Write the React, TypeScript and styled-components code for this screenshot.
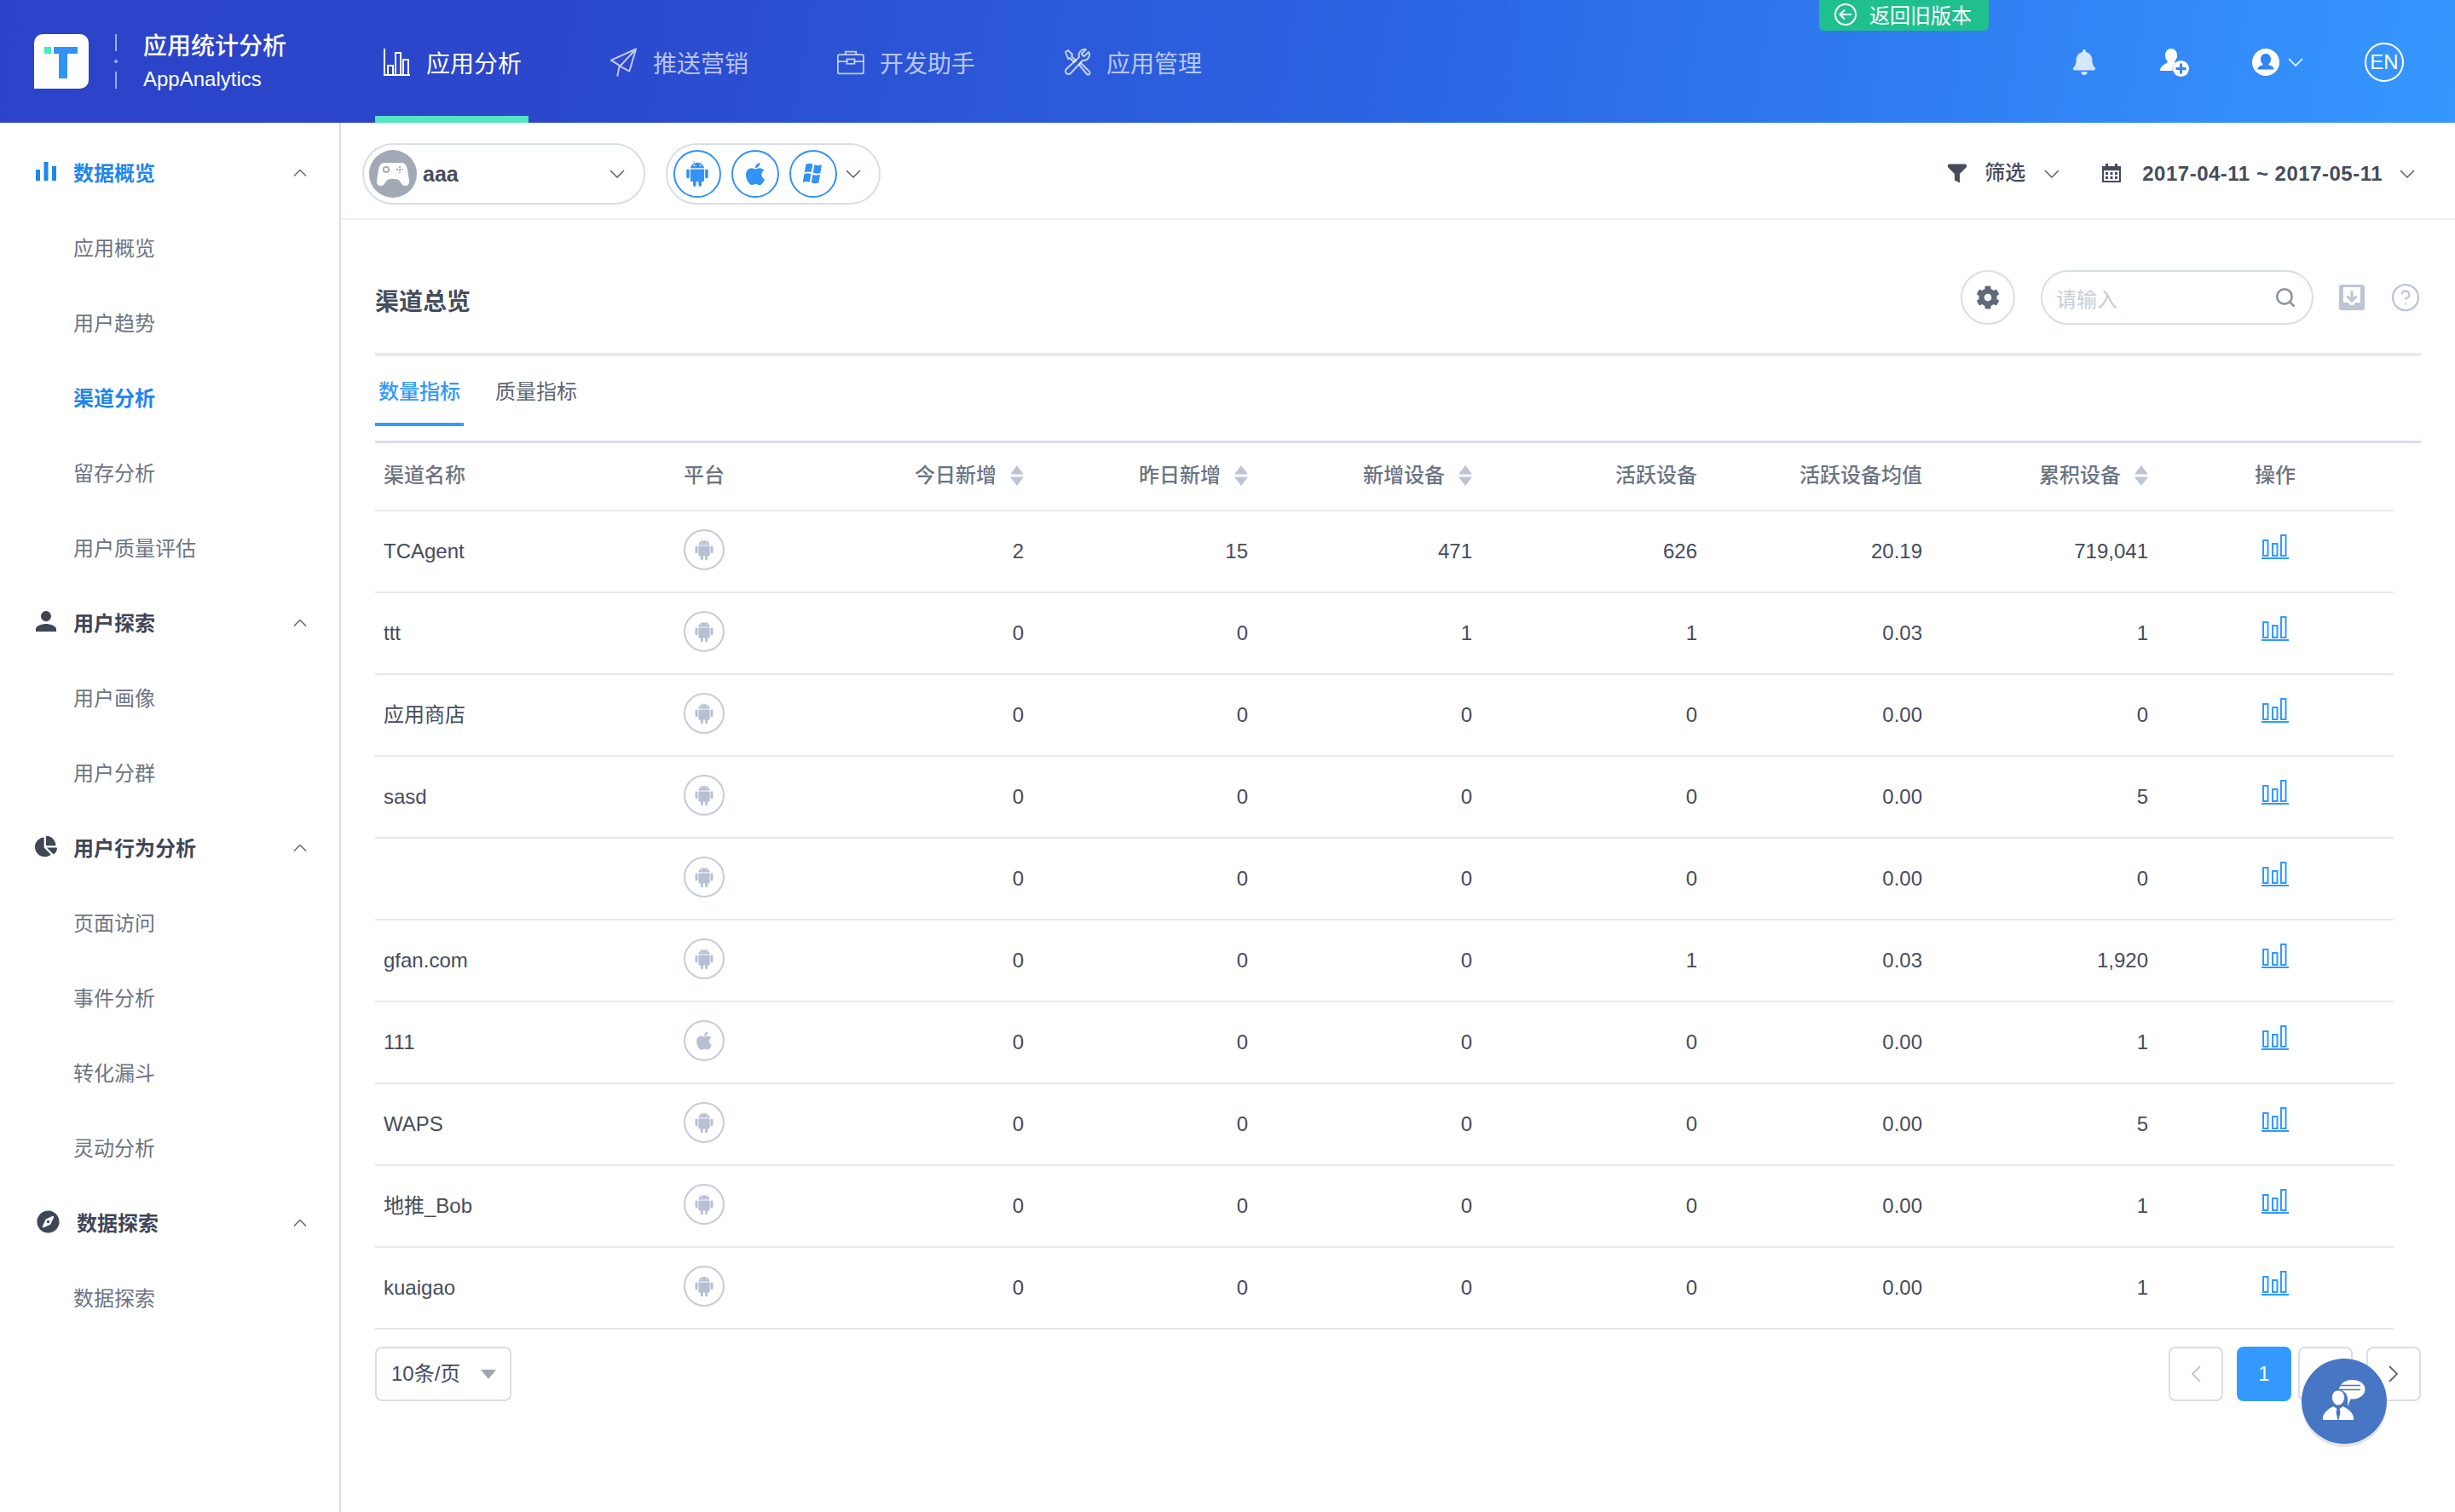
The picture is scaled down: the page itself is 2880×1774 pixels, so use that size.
import React from 'react';
import styled, { createGlobalStyle } from 'styled-components';
import { Search, CircleHelp } from 'lucide-react';
import { AiFillAndroid } from 'react-icons/ai';
import { FaApple, FaBell, FaCog, FaCompass, FaChartPie } from 'react-icons/fa';
import { MdPerson } from 'react-icons/md';

const GlobalStyle = createGlobalStyle`
  html, body {
    margin: 0;
    padding: 0;
    background: #fff;
  }
  * {
    box-sizing: border-box;
  }
  body {
    font-family: "Liberation Sans", "Noto Sans CJK SC", sans-serif;
    color: #454c5c;
  }
`;

const Page = styled.div`
  display: flex;
  flex-direction: column;
  min-height: 1774px;
  position: relative;
  overflow: hidden;
`;

/* ---------- top bar ---------- */

const TopBar = styled.header`
  align-items: center;
  background: linear-gradient(100deg, #2b43c8 0%, #2b47cc 22%, #2b68e5 60%, #3697ff 100%);
  display: flex;
  height: 144px;
  padding: 0 60px 0 40px;
  position: relative;
`;

const LogoBox = styled.div`
  background: #fff;
  border-radius: 10px 10px 10px 0;
  height: 64px;
  position: relative;
  width: 64px;
  &::before {
    background: #3cf0c0;
    content: '';
    height: 8px;
    left: 12px;
    position: absolute;
    top: 15px;
    width: 8px;
  }
`;

const LogoT = styled.svg`
  height: 37px;
  left: 23px;
  position: absolute;
  top: 15px;
  width: 28px;
`;

const LogoDivider = styled.div`
  align-items: center;
  display: flex;
  flex-direction: column;
  height: 64px;
  justify-content: space-between;
  margin: 0 31px 0 31px;
  width: 2px;
`;

const LogoDash = styled.span<{ $dot?: boolean }>`
  background: rgba(255, 255, 255, 0.55);
  border-radius: ${(p) => (p.$dot ? '50%' : '0')};
  display: block;
  height: ${(p) => (p.$dot ? '4px' : '20px')};
  width: ${(p) => (p.$dot ? '4px' : '2px')};
`;

const Brand = styled.div`
  color: #fff;
  display: flex;
  flex-direction: column;
  padding-top: 3px;
  width: 272px;
`;

const BrandTitle = styled.div`
  font-size: 28px;
  font-weight: 500;
  line-height: 38px;
`;

const BrandSub = styled.div`
  font-size: 24px;
  line-height: 38px;
`;

const NavList = styled.nav`
  align-items: stretch;
  display: flex;
  gap: 86px;
  height: 144px;
`;

const NavItem = styled.div<{ $active?: boolean }>`
  align-items: center;
  border-bottom: 8px solid ${(p) => (p.$active ? '#54e5c3' : 'transparent')};
  color: ${(p) => (p.$active ? '#fff' : 'rgba(255, 255, 255, 0.68)')};
  display: flex;
  font-size: 28px;
  gap: 18px;
  padding: 10px 0 0 10px;
  width: 180px;
  white-space: nowrap;
`;

const NavIconSlot = styled.span`
  align-items: center;
  display: flex;
  height: 34px;
  justify-content: center;
  width: 32px;
`;

const BackTab = styled.div`
  align-items: center;
  background: #1fc08e;
  border-radius: 0 0 6px 6px;
  color: #fff;
  display: flex;
  font-size: 24px;
  gap: 15px;
  height: 36px;
  left: 2134px;
  padding: 0 0 3px 18px;
  position: absolute;
  top: 0;
  white-space: nowrap;
  width: 199px;
`;

const TopRight = styled.div`
  align-items: center;
  display: flex;
  gap: 74px;
  margin-left: auto;
  padding-top: 2px;
`;

const UserGroup = styled.div`
  align-items: center;
  display: flex;
  gap: 10px;
  margin-right: -2px;
`;

const LangBadge = styled.div`
  align-items: center;
  border: 2px solid #fff;
  border-radius: 50%;
  color: #fff;
  display: flex;
  font-size: 24px;
  height: 46px;
  justify-content: center;
  width: 46px;
`;

/* ---------- shared bits ---------- */

const ChevronSvg = styled.svg<{ $up?: boolean; $color?: string; $w?: number }>`
  color: ${(p) => p.$color || '#5d6573'};
  display: block;
  height: 10px;
  transform: ${(p) => (p.$up ? 'rotate(180deg)' : 'none')};
  width: ${(p) => p.$w || 18}px;
`;

const Chevron: React.FC<{ up?: boolean; color?: string; w?: number }> = ({ up, color, w }) => (
  <ChevronSvg $up={up} $color={color} $w={w} viewBox="0 0 18 10">
    <polyline points="1,1 9,9 17,1" fill="none" stroke="currentColor" strokeWidth="1.6" />
  </ChevronSvg>
);

/* ---------- body layout ---------- */

const Body = styled.div`
  display: flex;
  flex: 1;
`;

const Sidebar = styled.aside`
  border-right: 2px solid #d6dce7;
  flex: none;
  padding-top: 13px;
  width: 400px;
`;

const MenuRow = styled.div<{ $group?: boolean; $active?: boolean }>`
  align-items: center;
  color: ${(p) => (p.$active ? '#1f86ee' : p.$group ? '#3f4757' : '#6c7583')};
  display: flex;
  font-size: 24px;
  font-weight: ${(p) => (p.$active || p.$group ? 700 : 400)};
  height: 88px;
  padding-left: ${(p) => (p.$group ? '42px' : '86px')};
  padding-right: 38px;
`;

const MenuIcon = styled.span<{ $wide?: boolean }>`
  align-items: center;
  display: flex;
  justify-content: center;
  margin-right: 20px;
  width: ${(p) => (p.$wide ? '28px' : '24px')};
`;

const MenuLabel = styled.span`
  flex: 1;
`;

const MenuChevron = styled.span`
  display: block;
  padding-top: 4px;
`;

const Main = styled.main`
  display: flex;
  flex: 1;
  flex-direction: column;
  min-width: 0;
`;

const FilterBar = styled.div`
  align-items: center;
  border-bottom: 2px solid #eef0f4;
  display: flex;
  height: 114px;
  padding: 8px 47px 0 25px;
`;

const AppPill = styled.div`
  align-items: center;
  border: 2px solid #d8dee8;
  border-radius: 36px;
  display: flex;
  height: 72px;
  padding-left: 6px;
  padding-right: 22px;
  width: 332px;
`;

const AppAvatar = styled.span`
  align-items: center;
  background: #a0a9b5;
  border-radius: 50%;
  display: flex;
  height: 56px;
  justify-content: center;
  width: 56px;
`;

const AppName = styled.span`
  color: #454c5c;
  flex: 1;
  font-size: 25px;
  font-weight: 700;
  margin-left: 7px;
`;

const PlatformPill = styled.div`
  align-items: center;
  border: 2px solid #d8dee8;
  border-radius: 36px;
  display: flex;
  gap: 12px;
  height: 72px;
  margin-left: 24px;
  padding-left: 7px;
  width: 252px;
`;

const PlatformButton = styled.span`
  align-items: center;
  border: 2px solid #3393f5;
  border-radius: 50%;
  color: #3393f5;
  display: flex;
  font-size: 34px;
  height: 56px;
  justify-content: center;
  width: 56px;
`;

const PlatformChevron = styled.span`
  display: block;
  margin-left: -2px;
`;

const FilterTools = styled.div`
  align-items: center;
  color: #454c5c;
  display: flex;
  font-size: 24px;
  font-weight: 500;
  margin-left: auto;
`;

const FilterLabel = styled.span`
  line-height: 28px;
  margin: 0 22px 0 20px;
  padding-bottom: 3px;
`;

const DateLabel = styled.span`
  font-size: 24px;
  font-weight: 700;
  letter-spacing: 0.5px;
  margin: 0 20px 0 24px;
  white-space: nowrap;
`;

const Spacer = styled.span`
  display: block;
  width: 49px;
`;

const Content = styled.section`
  display: flex;
  flex: 1;
  flex-direction: column;
  padding: 0 40px;
`;

const PanelHead = styled.div`
  align-items: center;
  border-bottom: 4px solid #e6e9ef;
  display: flex;
  height: 160px;
  padding-top: 26px;
`;

const PanelTitle = styled.h2`
  color: #454c5c;
  font-size: 28px;
  font-weight: 700;
  margin: 6px 0 0;
`;

const PanelTools = styled.div`
  align-items: center;
  display: flex;
  margin-left: auto;
`;

const GearButton = styled.span`
  align-items: center;
  border: 2px solid #d8dee8;
  border-radius: 50%;
  color: #5e6a7c;
  display: flex;
  font-size: 28px;
  height: 64px;
  justify-content: center;
  width: 64px;
`;

const SearchBox = styled.div`
  align-items: center;
  border: 2px solid #d8dee8;
  border-radius: 32px;
  color: #c6cdd9;
  display: flex;
  font-size: 24px;
  height: 64px;
  justify-content: space-between;
  margin-left: 30px;
  padding: 0 18px 0 16px;
  width: 320px;
`;

const ToolIcon = styled.span`
  display: flex;
  margin-left: 30px;
`;

const TabBar = styled.div`
  border-bottom: 3px solid #d8dee8;
  display: flex;
  gap: 33px;
  height: 102px;
  padding-top: 23px;
`;

const Tab = styled.div<{ $active?: boolean }>`
  border-bottom: 4px solid ${(p) => (p.$active ? '#3399ff' : 'transparent')};
  color: ${(p) => (p.$active ? '#3399ff' : '#5b6472')};
  font-size: 24px;
  font-weight: ${(p) => (p.$active ? 500 : 400)};
  height: 59px;
  line-height: 38px;
  padding: 0 4px;
  text-align: center;
  width: 104px;
`;

const COLUMNS = '362px 200px 199px 263px 263px 264px 264px 265px 288px';

const TableWrap = styled.div`
  width: 2368px;
`;

const GridRow = styled.div<{ $head?: boolean }>`
  align-items: center;
  border-bottom: 2px solid #e6e9ef;
  color: ${(p) => (p.$head ? '#6b7482' : '#454c5c')};
  display: grid;
  font-size: 24px;
  font-weight: ${(p) => (p.$head ? 500 : 400)};
  grid-template-columns: ${COLUMNS};
  height: ${(p) => (p.$head ? '80px' : '96px')};
  line-height: 28px;
  padding-bottom: ${(p) => (p.$head ? '2px' : '0')};
`;

const NameCell = styled.div`
  padding-left: 10px;
`;

const PlatformCell = styled.div`
  display: flex;
`;

const NumCell = styled.div`
  text-align: right;
`;

const HeadNumCell = styled.div`
  align-items: center;
  display: flex;
  gap: 16px;
  justify-content: flex-end;
`;

const OpCell = styled.div`
  color: #6b7482;
  padding-left: 125px;
`;

const OpIconCell = styled.div`
  display: flex;
  margin-top: -13px;
  padding-left: 133px;
`;

const SortGlyph = styled.svg`
  display: block;
  height: 24px;
  width: 16px;
`;

const PlatformBadge = styled.span`
  align-items: center;
  border: 2px solid #c4cbdc;
  border-radius: 50%;
  color: #b7bfd2;
  display: flex;
  font-size: 28px;
  height: 48px;
  justify-content: center;
  margin-top: -4px;
  width: 48px;
`;

const FooterRow = styled.div`
  align-items: flex-start;
  display: flex;
  justify-content: space-between;
  padding-top: 20px;
`;

const PageSize = styled.div`
  align-items: center;
  border: 2px solid #d8dee8;
  border-radius: 8px;
  color: #454c5c;
  display: flex;
  font-size: 24px;
  height: 64px;
  justify-content: space-between;
  line-height: 28px;
  padding: 0 16px 0 17px;
  width: 160px;
`;

const Caret = styled.span`
  border-left: 9px solid transparent;
  border-right: 9px solid transparent;
  border-top: 11px solid #9ca5b3;
  display: block;
`;

const Pager = styled.div`
  display: flex;
`;

const PageButton = styled.span<{ $active?: boolean; $gap?: number }>`
  align-items: center;
  background: ${(p) => (p.$active ? '#3399ff' : '#fff')};
  border: 2px solid ${(p) => (p.$active ? '#3399ff' : '#d8dee8')};
  border-radius: 8px;
  color: ${(p) => (p.$active ? '#fff' : '#454c5c')};
  display: flex;
  font-size: 24px;
  height: 64px;
  justify-content: center;
  margin-left: ${(p) => p.$gap || 0}px;
  width: 64px;
`;

const ChatBubble = styled.div`
  align-items: center;
  background: #4676c4;
  border-radius: 50%;
  box-shadow: 0 4px 0 rgba(0, 0, 0, 0.1);
  display: flex;
  height: 100px;
  justify-content: center;
  left: 2700px;
  position: absolute;
  top: 1594px;
  width: 100px;
`;

/* ---------- drawn icons ---------- */

const NAV_DIM = 'rgba(255,255,255,0.72)';

const BarsOutline = () => (
  <svg width="32" height="32" viewBox="0 0 32 32" fill="none" stroke="#fff" strokeWidth="2">
    <path d="M1 0v31h30M5 31V20h6v11M14 31V5h6v26M23 31V13h6v18" />
  </svg>
);

const Plane = () => (
  <svg width="33" height="35" viewBox="0 0 33 35" fill="none" stroke={NAV_DIM} strokeWidth="2" strokeLinejoin="round">
    <path d="M31 1L1 14.500l11 7L31 1 23 28l-12-6.500L8.500 34" />
  </svg>
);

const Case = () => (
  <svg width="36" height="32" viewBox="0 0 36 32" fill="none" stroke={NAV_DIM} strokeWidth="2">
    <rect x="1" y="6" width="34" height="25" rx="2" />
    <path d="M11 6V2h14v4M1 15h12M23 15h12" />
    <rect x="13" y="12" width="10" height="6" />
  </svg>
);

const Tools = () => (
  <svg width="32" height="32" viewBox="0 0 32 32" fill="none" stroke={NAV_DIM} strokeWidth="2" strokeLinejoin="round">
    <path d="M2 4l3-2 5 5-1 2 5 5-2 2-5-5-2 1zM18 19l2-2 10 10a2 2 0 0 1-3 3z" />
    <path d="M29 4l-5 5-2-1-1-2 5-5a7 7 0 0 0-8 9L3 24a3 3 0 0 0 5 5l14-15a7 7 0 0 0 8-8z" />
  </svg>
);

const BackIcon = () => (
  <svg width="26" height="26" viewBox="0 0 26 26" fill="none" stroke="#fff" strokeWidth="2">
    <circle cx="13" cy="13" r="12" />
    <path d="M20 13H7M12 7.500L6.500 13l5.500 5.500" />
  </svg>
);

const AddUser = () => (
  <svg width="34" height="34" viewBox="0 0 34 34">
    <path fill="#fff" d="M13 1c4 0 7 3 7 8 0 3-1 5-3 7l1 2c-3 2-4 6-3 9H0c0-4 3-7 8-9l1-2c-2-2-3-4-3-7 0-5 3-8 7-8z" />
    <circle cx="24.500" cy="24.500" r="9.500" fill="#fff" />
    <path d="M24.500 18.500v12M18.500 24.500h12" stroke="#3187f5" strokeWidth="3" />
  </svg>
);

const UserCircle = () => (
  <svg width="32" height="32" viewBox="0 0 32 32">
    <circle cx="16" cy="16" r="16" fill="#fff" />
    <path fill="#2f86f5" d="M16 6c3.500 0 6 2.600 6 6.400 0 2.300-1 4.300-2.500 5.500v1.300c3 1 6 2.300 6 4.800v.5H6.500V24c0-2.500 3-3.800 6-4.800v-1.300C11 16.700 10 14.700 10 12.400 10 8.600 12.500 6 16 6z" />
  </svg>
);

const Gamepad = () => (
  <svg width="40" height="32" viewBox="0 0 40 32">
    <path fill="#fff" d="M10 3h20c4 0 6 3 7 8l2 13c.5 4-2 6-5 6-2 0-3-1-5-4-1.500-2.500-3-4-9-4s-7.500 1.500-9 4c-2 3-3 4-5 4-3 0-5.500-2-5-6l2-13c1-5 3-8 7-8z" />
    <circle cx="12" cy="11" r="3.200" fill="none" stroke="#a0a9b5" strokeWidth="1.800" />
    <path d="M28 7v8M24 11h8" stroke="#a0a9b5" strokeWidth="1.800" strokeDasharray="2 1.500" />
  </svg>
);

const WindowsFlag = () => (
  <svg width="30" height="28" viewBox="0 0 28 26" fill="#3393f5">
    <path d="M6 2.500c2.500-1.200 5-1.200 7.500-.3L11.900 11.300c-2.600-1-5-1-7.500.2z" />
    <path d="M15.300 2.900c2.700 1 5.300 1.200 8 .1l-1.500 9c-2.700 1-5.300.8-8-.1z" />
    <path d="M4.100 13.200c2.500-1.200 5-1.200 7.500-.2L10 22.200c-2.500-1-5-1-7.500.3z" />
    <path d="M13.500 13.600c2.700 1 5.300 1.100 8 .1l-1.600 9.100c-2.700 1-5.300.8-7.900-.2z" />
  </svg>
);

const Funnel = () => (
  <svg width="24" height="24" viewBox="0 0 24 24" fill="#454c5c">
    <path d="M1 2c0-1 1-1.500 2-1.500h18c1 0 2 .5 2 1.500v2l-8 8v10.500l-6-3V12L1 4z" />
  </svg>
);

const CalendarGlyph = () => (
  <svg width="24" height="24" viewBox="0 0 24 24">
    <path fill="#454c5c" d="M1 3h4V0h3v3h8V0h3v3h4v19H1z" />
    <rect x="3" y="8" width="18" height="12" fill="#fff" />
    <g fill="#454c5c">
      <rect x="5" y="10" width="3" height="3" />
      <rect x="10.500" y="10" width="3" height="3" />
      <rect x="16" y="10" width="3" height="3" />
      <rect x="5" y="15" width="3" height="3" />
      <rect x="10.500" y="15" width="3" height="3" />
      <rect x="16" y="15" width="3" height="3" />
    </g>
  </svg>
);

const DownloadGlyph = () => (
  <svg width="30" height="30" viewBox="0 0 30 30">
    <rect width="30" height="30" rx="3" fill="#bcc5d6" />
    <path fill="#fff" d="M5 3h20v18h-6l-2 3h-4l-2-3H5z" />
    <path d="M15 7v12M9.500 13.500l5.500 5.500 5.500-5.500" fill="none" stroke="#bcc5d6" strokeWidth="3" />
  </svg>
);

const SortArrows = () => (
  <SortGlyph viewBox="0 0 16 24" fill="#bdc5d4">
    <path d="M8 0l8 10.500H0zM0 13.500h16L8 24z" />
  </SortGlyph>
);

const ChartLink = () => (
  <svg width="32" height="30" viewBox="0 0 32 30" fill="none" stroke="#3399ff" strokeWidth="2">
    <rect x="2" y="8" width="5.500" height="18" />
    <rect x="13" y="12" width="5.500" height="14" />
    <rect x="23" y="2" width="5.500" height="24" />
    <path d="M0 29h32" />
  </svg>
);

const SideBars = ({ color }: { color: string }) => (
  <svg width="24" height="22" viewBox="0 0 24 22" fill={color}>
    <rect x="0" y="9" width="5" height="13" />
    <rect x="9.500" y="0" width="5" height="22" />
    <rect x="19" y="5" width="5" height="17" />
  </svg>
);

const PrevArrow = () => (
  <svg width="12" height="20" viewBox="0 0 12 20" fill="none" stroke="#c2c6cc" strokeWidth="1.800">
    <polyline points="11,1 2,10 11,19" />
  </svg>
);

const NextArrow = () => (
  <svg width="12" height="20" viewBox="0 0 12 20" fill="none" stroke="#5d6573" strokeWidth="1.800">
    <polyline points="1,1 10,10 1,19" />
  </svg>
);

const Agent = () => (
  <svg width="50" height="50" viewBox="0 0 50 50" fill="#fff">
    <path d="M34 0c9 0 15.500 4.500 15.500 11S43.500 22 36 22.500c-1 .1-2.500 0-3.500 0L29 31v-9c0-5-4-9.500-10-11C20 4.500 26 0 34 0z" />
    <path d="M19 6.500h25M19 11.500h25" stroke="#4676c4" strokeWidth="1.500" />
    <path d="M18 12c4.500 0 7.500 3.600 7.500 8.500s-3.300 9.500-7.500 9.500-7.500-4.600-7.500-9.500S13.500 12 18 12z" stroke="#4676c4" strokeWidth="1" />
    <path d="M12.500 31l4 3-1 4 2 9H0v-2c0-6 6-11 12.500-14zM23.500 31l-4 3 1 4-2 9h17.500v-2c0-6-6-11-12.500-14z" />
  </svg>
);

/* ---------- data ---------- */

type Channel = {
  name: string;
  os: 'android' | 'apple';
  values: string[];
};

const channels: Channel[] = [
  { name: 'TCAgent', os: 'android', values: ['2', '15', '471', '626', '20.19', '719,041'] },
  { name: 'ttt', os: 'android', values: ['0', '0', '1', '1', '0.03', '1'] },
  { name: '应用商店', os: 'android', values: ['0', '0', '0', '0', '0.00', '0'] },
  { name: 'sasd', os: 'android', values: ['0', '0', '0', '0', '0.00', '5'] },
  { name: '', os: 'android', values: ['0', '0', '0', '0', '0.00', '0'] },
  { name: 'gfan.com', os: 'android', values: ['0', '0', '0', '1', '0.03', '1,920'] },
  { name: '111', os: 'apple', values: ['0', '0', '0', '0', '0.00', '1'] },
  { name: 'WAPS', os: 'android', values: ['0', '0', '0', '0', '0.00', '5'] },
  { name: '地推_Bob', os: 'android', values: ['0', '0', '0', '0', '0.00', '1'] },
  { name: 'kuaigao', os: 'android', values: ['0', '0', '0', '0', '0.00', '1'] },
];

const headColumns = [
  { label: '今日新增', sort: true },
  { label: '昨日新增', sort: true },
  { label: '新增设备', sort: true },
  { label: '活跃设备', sort: false },
  { label: '活跃设备均值', sort: false },
  { label: '累积设备', sort: true },
];

type MenuEntry = { label: string; group?: boolean; active?: boolean; icon?: React.ReactNode; wide?: boolean };

const menu: MenuEntry[] = [
  { label: '数据概览', group: true, active: true, icon: <SideBars color="#1f86ee" /> },
  { label: '应用概览' },
  { label: '用户趋势' },
  { label: '渠道分析', active: true },
  { label: '留存分析' },
  { label: '用户质量评估' },
  { label: '用户探索', group: true, icon: <MdPerson size={36} color="#3f4757" style={{ flex: 'none' }} /> },
  { label: '用户画像' },
  { label: '用户分群' },
  { label: '用户行为分析', group: true, icon: <FaChartPie size={26} color="#3f4757" style={{ flex: 'none' }} /> },
  { label: '页面访问' },
  { label: '事件分析' },
  { label: '转化漏斗' },
  { label: '灵动分析' },
  { label: '数据探索', group: true, wide: true, icon: <FaCompass size={27} color="#3f4757" /> },
  { label: '数据探索' },
];

export default function App() {
  return (
    <Page>
      <GlobalStyle />
      <TopBar>
        <LogoBox>
          <LogoT viewBox="0 0 28 37" fill="#3393f5">
            <path d="M0 0h28v8H16v29H6V8H0z" />
          </LogoT>
        </LogoBox>
        <LogoDivider>
          <LogoDash />
          <LogoDash $dot />
          <LogoDash />
        </LogoDivider>
        <Brand>
          <BrandTitle>应用统计分析</BrandTitle>
          <BrandSub>AppAnalytics</BrandSub>
        </Brand>
        <NavList>
          <NavItem $active>
            <NavIconSlot><BarsOutline /></NavIconSlot>
            应用分析
          </NavItem>
          <NavItem>
            <NavIconSlot><Plane /></NavIconSlot>
            推送营销
          </NavItem>
          <NavItem>
            <NavIconSlot><Case /></NavIconSlot>
            开发助手
          </NavItem>
          <NavItem>
            <NavIconSlot><Tools /></NavIconSlot>
            应用管理
          </NavItem>
        </NavList>
        <BackTab>
          <BackIcon />
          返回旧版本
        </BackTab>
        <TopRight>
          <FaBell size={30} color="#d6e6ff" />
          <AddUser />
          <UserGroup>
            <UserCircle />
            <Chevron color="#fff" />
          </UserGroup>
          <LangBadge>EN</LangBadge>
        </TopRight>
      </TopBar>

      <Body>
        <Sidebar>
          {menu.map((item, i) => (
            <MenuRow key={i} $group={item.group} $active={item.active}>
              {item.group && <MenuIcon $wide={item.wide}>{item.icon}</MenuIcon>}
              <MenuLabel>{item.label}</MenuLabel>
              {item.group && (
                <MenuChevron>
                  <Chevron up color="#5d6573" w={16} />
                </MenuChevron>
              )}
            </MenuRow>
          ))}
        </Sidebar>

        <Main>
          <FilterBar>
            <AppPill>
              <AppAvatar><Gamepad /></AppAvatar>
              <AppName>aaa</AppName>
              <Chevron />
            </AppPill>
            <PlatformPill>
              <PlatformButton><AiFillAndroid /></PlatformButton>
              <PlatformButton><FaApple size={30} /></PlatformButton>
              <PlatformButton><WindowsFlag /></PlatformButton>
              <PlatformChevron><Chevron /></PlatformChevron>
            </PlatformPill>
            <FilterTools>
              <Funnel />
              <FilterLabel>筛选</FilterLabel>
              <Chevron />
              <Spacer />
              <CalendarGlyph />
              <DateLabel>2017-04-11 ~ 2017-05-11</DateLabel>
              <Chevron />
            </FilterTools>
          </FilterBar>

          <Content>
            <PanelHead>
              <PanelTitle>渠道总览</PanelTitle>
              <PanelTools>
                <GearButton><FaCog /></GearButton>
                <SearchBox>
                  请输入
                  <Search size={26} color="#8b94a3" strokeWidth={2.4} />
                </SearchBox>
                <ToolIcon><DownloadGlyph /></ToolIcon>
                <ToolIcon><CircleHelp size={36} color="#bcc5d6" strokeWidth={1.5} /></ToolIcon>
              </PanelTools>
            </PanelHead>

            <TabBar>
              <Tab $active>数量指标</Tab>
              <Tab>质量指标</Tab>
            </TabBar>

            <TableWrap>
              <GridRow $head>
                <NameCell>渠道名称</NameCell>
                <PlatformCell>平台</PlatformCell>
                {headColumns.map((col) => (
                  <HeadNumCell key={col.label}>
                    {col.label}
                    {col.sort && <SortArrows />}
                  </HeadNumCell>
                ))}
                <OpCell>操作</OpCell>
              </GridRow>
              {channels.map((row, i) => (
                <GridRow key={i}>
                  <NameCell>{row.name}</NameCell>
                  <PlatformCell>
                    <PlatformBadge>{row.os === 'apple' ? <FaApple size={24} /> : <AiFillAndroid />}</PlatformBadge>
                  </PlatformCell>
                  {row.values.map((v, j) => (
                    <NumCell key={j}>{v}</NumCell>
                  ))}
                  <OpIconCell><ChartLink /></OpIconCell>
                </GridRow>
              ))}
            </TableWrap>

            <FooterRow>
              <PageSize>
                10条/页
                <Caret />
              </PageSize>
              <Pager>
                <PageButton><PrevArrow /></PageButton>
                <PageButton $active $gap={16}>1</PageButton>
                <PageButton $gap={8}>2</PageButton>
                <PageButton $gap={16}><NextArrow /></PageButton>
              </Pager>
            </FooterRow>
          </Content>
        </Main>
      </Body>

      <ChatBubble><Agent /></ChatBubble>
    </Page>
  );
}
